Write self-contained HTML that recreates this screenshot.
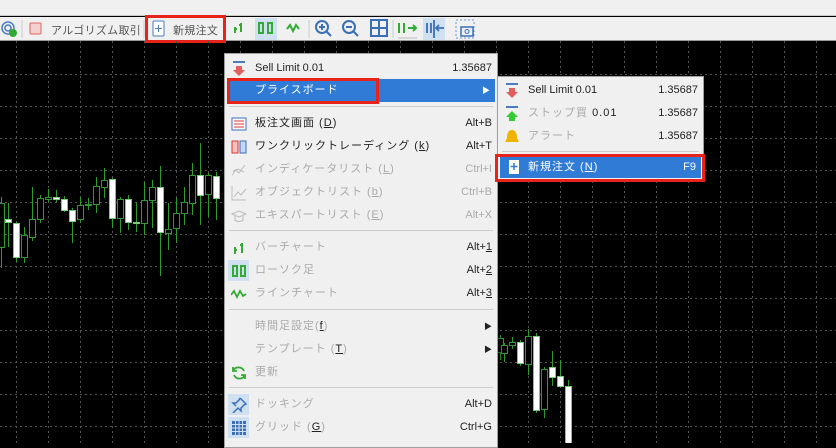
<!DOCTYPE html>
<html><head><meta charset="utf-8">
<style>
*{margin:0;padding:0;box-sizing:border-box}
body{width:836px;height:443px;overflow:hidden;background:#000;font-family:"Liberation Sans","Noto Sans CJK JP",sans-serif;font-size:11px;position:relative}
#top{position:absolute;left:0;top:0;width:836px;height:16px;background:#f0f0f0;border-bottom:1px solid #c8c8c8}
#tb{position:absolute;left:0;top:17px;width:836px;height:24px;background:#f0f0f0;border-bottom:1px solid #999}
.tbt{position:absolute;top:5px;font-size:11px;color:#555;letter-spacing:0.3px}
.red{position:absolute;border:3px solid #e8231a}
#chart{position:absolute;left:0;top:41px}
.menu{position:absolute;background:#f0f0f0;border:1px solid #a0a0a0;box-shadow:2px 2px 3px rgba(0,0,0,.4)}
.it{position:absolute;left:0;right:0;height:23px;line-height:23px;color:#222;font-size:11px}
.it .l{position:absolute;left:30px;letter-spacing:1px}
.it .r{position:absolute;right:5px}
.g{color:#aaa}
.sep{position:absolute;left:4px;right:4px;height:1px;background:#ccc}
.ic{position:absolute;left:6px;top:4px;width:16px;height:16px}
.hl{background:#2f7bd6;color:#fff}
</style></head><body>
<div id="top"></div>
<div id="tb">
<svg width="836" height="24" style="position:absolute;left:0;top:0">
<circle cx="8" cy="11" r="6" fill="none" stroke="#4a7cc0" stroke-width="1.5"/><circle cx="8" cy="11" r="3" fill="none" stroke="#4a7cc0" stroke-width="1.5"/><circle cx="13" cy="16" r="4" fill="#3a3"/>
<line x1="22" y1="3" x2="22" y2="21" stroke="#ccc"/>
<rect x="30" y="6" width="11" height="11" fill="#f4d0d0" stroke="#d66" rx="1"/>
<line x1="144" y1="3" x2="144" y2="21" stroke="#ccc"/>
<rect x="153" y="4" width="11" height="15" fill="#fff" stroke="#4a7cc0" rx="1"/><path d="M158.5 8v7M155 11.5h7" stroke="#4a7cc0"/>
<path d="M235 16v-6M235 12h2M241 6v9M239 8h2" stroke="#3a3" stroke-width="2" fill="none"/>
<rect x="255" y="1" width="22" height="22" fill="#cfe0f0"/>
<rect x="259" y="6" width="4" height="10" fill="none" stroke="#3a3" stroke-width="2"/><rect x="268" y="6" width="4" height="10" fill="none" stroke="#3a3" stroke-width="2"/>
<path d="M287 12l3-4 3 6 3-6 3 4" stroke="#3a3" stroke-width="2" fill="none"/>
<line x1="309" y1="3" x2="309" y2="21" stroke="#ccc"/>
<circle cx="322" cy="10" r="6" fill="none" stroke="#3a6fb8" stroke-width="2"/><path d="M326 14l5 5M319 10h6M322 7v6" stroke="#3a6fb8" stroke-width="2"/>
<circle cx="349" cy="10" r="6" fill="none" stroke="#3a6fb8" stroke-width="2"/><path d="M353 14l5 5M346 10h6" stroke="#3a6fb8" stroke-width="2"/>
<rect x="371" y="3" width="16" height="16" fill="none" stroke="#3a6fb8" stroke-width="2"/><path d="M379 3v16M371 11h16" stroke="#3a6fb8" stroke-width="2"/>
<line x1="393" y1="3" x2="393" y2="21" stroke="#ccc"/>
<path d="M399 6v10M404 6v10M408 11h7M413 8l3 3-3 3" stroke="#3a3" stroke-width="2" fill="none"/><line x1="398" y1="21" x2="417" y2="21" stroke="#bbb"/>
<rect x="423" y="1" width="22" height="22" fill="#cfe0f0"/><path d="M427 6v10M431 6v10M434 3v18M437 11h7M439 8l-3 3 3 3" stroke="#3a6fb8" stroke-width="1.8" fill="none"/>
<rect x="456" y="3" width="18" height="18" fill="none" stroke="#6a9ad0" stroke-dasharray="2 2"/><rect x="461" y="10" width="12" height="9" fill="none" stroke="#3a6fb8" stroke-width="1.5"/><circle cx="467" cy="14.5" r="2" fill="none" stroke="#3a6fb8"/>
</svg>
<div class="tbt" style="left:51px">アルゴリズム取引</div>
<div class="tbt" style="left:173px">新規注文</div>
</div>
<div class="red" style="left:145px;top:15px;width:81px;height:28px"></div>
<svg id="chart" width="836" height="402"></svg>

<div class="menu" style="left:224px;top:53px;width:274px;height:395px">
<div class="it" style="top:3px"><svg class="ic" viewBox="0 0 16 16"><path d="M2 1h12" stroke="#4a7cc0" stroke-width="2"/><path d="M5 5h6v4h3l-6 6-6-6h3z" fill="#e06060"/></svg><span class="l" style="letter-spacing:0">Sell Limit 0.01</span><span class="r">1.35687</span></div>
<div class="it hl" style="top:25px;left:2px;right:2px"><span class="l" style="left:28px">プライスボード</span><span class="r" style="font-size:8px">▶</span></div>
<div class="sep" style="top:52px"></div>
<div class="it" style="top:58px"><svg class="ic" viewBox="0 0 16 16"><rect x="1" y="2" width="14" height="12" fill="#fff" stroke="#3a6fb8"/><path d="M3 5h10M3 8h10M3 11h10" stroke="#d33"/></svg><span class="l">板注文画面 (<u>D</u>)</span><span class="r">Alt+B</span></div>
<div class="it" style="top:81px"><svg class="ic" viewBox="0 0 16 16"><rect x="1" y="2" width="6" height="12" fill="#f6c0c0" stroke="#d33"/><rect x="9" y="2" width="6" height="12" fill="#c0d8f6" stroke="#3a6fb8"/></svg><span class="l">ワンクリックトレーディング (<u>k</u>)</span><span class="r">Alt+T</span></div>
<div class="it g" style="top:104px"><svg class="ic" viewBox="0 0 16 16"><path d="M1 13l4-5 3 3 6-8M2 9l5-2 6 3" stroke="#bbb" fill="none"/></svg><span class="l">インディケータリスト (<u>L</u>)</span><span class="r">Ctrl+I</span></div>
<div class="it g" style="top:127px"><svg class="ic" viewBox="0 0 16 16"><path d="M1 1v14h14M3 12l4-5 3 3 5-6" stroke="#bbb" fill="none"/></svg><span class="l">オブジェクトリスト (<u>b</u>)</span><span class="r">Ctrl+B</span></div>
<div class="it g" style="top:150px"><svg class="ic" viewBox="0 0 16 16"><path d="M1 6l7-3 7 3-7 3zM4 8v4c2 2 6 2 8 0V8" stroke="#bbb" fill="none"/></svg><span class="l">エキスパートリスト (<u>E</u>)</span><span class="r">Alt+X</span></div>
<div class="sep" style="top:176px"></div>
<div class="it" style="top:182px"><svg class="ic" viewBox="0 0 16 16"><path d="M4 14V7M4 10h2M11 3v10M9 5h2" stroke="#3a3" stroke-width="2"/></svg><span class="l g">バーチャート</span><span class="r">Alt+<u>1</u></span></div>
<div class="it" style="top:205px"><div style="position:absolute;left:3px;top:1px;width:21px;height:21px;background:#cfe0f0"></div><svg class="ic" viewBox="0 0 16 16"><rect x="2" y="3" width="4" height="10" fill="none" stroke="#3a3" stroke-width="2"/><rect x="10" y="3" width="4" height="10" fill="none" stroke="#3a3" stroke-width="2"/></svg><span class="l g">ローソク足</span><span class="r">Alt+<u>2</u></span></div>
<div class="it" style="top:228px"><svg class="ic" viewBox="0 0 16 16"><path d="M0 9l3-4 3 6 3-6 3 5 3-2" stroke="#3a3" stroke-width="1.8" fill="none"/></svg><span class="l g">ラインチャート</span><span class="r">Alt+<u>3</u></span></div>
<div class="sep" style="top:255px"></div>
<div class="it" style="top:261px"><span class="l g">時間足設定(<u style="color:#222">f</u>)</span><span class="r" style="font-size:8px">▶</span></div>
<div class="it" style="top:284px"><span class="l g">テンプレート (<u style="color:#222">T</u>)</span><span class="r" style="font-size:8px">▶</span></div>
<div class="it" style="top:307px"><svg class="ic" viewBox="0 0 16 16"><path d="M13 6A6 6 0 0 0 2 6M3 10a6 6 0 0 0 11 0M2 2v4h4M14 14v-4h-4" stroke="#3a3" stroke-width="1.8" fill="none"/></svg><span class="l g">更新</span></div>
<div class="sep" style="top:333px"></div>
<div class="it" style="top:339px"><div style="position:absolute;left:3px;top:1px;width:21px;height:21px;background:#cfe0f0"></div><svg class="ic" viewBox="0 0 16 16"><path d="M9 1l6 6-2 1-3 3 0 3-3-3-5 5M9 1l-1 2-3 3-3 0 3 3" stroke="#3a6fb8" stroke-width="1.5" fill="none"/></svg><span class="l g">ドッキング</span><span class="r">Alt+D</span></div>
<div class="it" style="top:362px"><div style="position:absolute;left:3px;top:1px;width:21px;height:21px;background:#cfe0f0"></div><svg class="ic" viewBox="0 0 16 16"><rect x="1" y="1" width="14" height="14" fill="#3a6fb8"/><path d="M4.5 1v14M8 1v14M11.5 1v14M1 4.5h14M1 8h14M1 11.5h14" stroke="#cfe0f0"/></svg><span class="l g">グリッド (<u style="color:#222">G</u>)</span><span class="r">Ctrl+G</span></div>
</div>

<div class="menu" style="left:497px;top:76px;width:207px;height:104px">
<div class="it" style="top:2px"><svg class="ic" viewBox="0 0 16 16"><path d="M2 1h12" stroke="#4a7cc0" stroke-width="2"/><path d="M5 5h6v4h3l-6 6-6-6h3z" fill="#e06060"/></svg><span class="l" style="letter-spacing:0">Sell Limit 0.01</span><span class="r">1.35687</span></div>
<div class="it" style="top:25px"><svg class="ic" viewBox="0 0 16 16"><path d="M2 1h12" stroke="#4a7cc0" stroke-width="2"/><path d="M5 15h6v-4h3l-6-6-6 6h3z" fill="#3c3"/></svg><span class="l g">ストップ買 <span style="color:#222">0.01</span></span><span class="r">1.35687</span></div>
<div class="it" style="top:48px"><svg class="ic" viewBox="0 0 16 16"><path d="M8 1c-4 0-5 4-5 8l-2 4h14l-2-4c0-4-1-8-5-8z" fill="#f0b400"/></svg><span class="l g">アラート</span><span class="r">1.35687</span></div>
<div class="sep" style="top:74px"></div>
<div class="it hl" style="top:79px;left:2px;right:2px;height:22px;line-height:22px"><svg class="ic" viewBox="0 0 16 16" style="top:3px"><rect x="3" y="1" width="10" height="14" fill="#fff"/><path d="M8 4v7M4.5 7.5h7" stroke="#2f7bd6" stroke-width="1.5"/></svg><span class="l" style="left:28px">新規注文 (<u>N</u>)</span><span class="r">F9</span></div>
</div>

<div class="red" style="left:227px;top:78px;width:152px;height:26px"></div>
<div class="red" style="left:495px;top:154px;width:210px;height:28px"></div>

<script>
var s=document.getElementById('chart'),h='';
for(var x=16;x<836;x+=32)h+='<line x1="'+(x+.5)+'" y1="0" x2="'+(x+.5)+'" y2="402" stroke="#555" stroke-dasharray="2 3"/>';
for(var y=33;y<402;y+=32)h+='<line x1="0" y1="'+(y+.5)+'" x2="836" y2="'+(y+.5)+'" stroke="#555" stroke-dasharray="2 3"/>';
var c=[[1,197,268,203,247,0],[8,203,247,219,222,1],[16,222,262,223,257,1],[24,227,263,235,257,0],[32,187,241,219,237,0],[40,195,223,198,219,0],[48,189,202,197,199,0],[56,190,202,197,199,1],[64,196,212,199,210,1],[72,208,243,210,221,1],[80,197,223,205,219,0],[88,198,210,204,205,0],[96,177,213,186,204,0],[104,168,198,180,187,0],[112,178,228,179,218,1],[120,197,233,199,218,0],[128,195,230,199,222,1],[136,202,232,222,223,1],[144,182,235,200,223,0],[152,180,228,187,200,0],[160,166,276,187,232,1],[168,203,250,229,233,0],[176,198,243,213,228,0],[184,187,225,202,213,0],[192,163,215,175,203,0],[200,143,225,175,195,1],[208,173,217,175,194,0],[216,172,220,176,198,1],
[500,335,360,338,352,0],[504,343,362,345,353,0],[512,337,349,342,345,0],[520,340,366,342,363,1],[528,329,375,336,364,0],[536,333,413,336,410,1],[544,367,418,369,409,0],[552,351,386,367,377,1],[560,360,387,376,386,1],[568,380,460,386,460,1]];
c.forEach(function(k){var o=41;h+='<line x1="'+(k[0]+.5)+'" y1="'+(k[1]-o)+'" x2="'+(k[0]+.5)+'" y2="'+(k[2]-o)+'" stroke="#2e9a2e"/>';
h+='<rect x="'+(k[0]-2.5)+'" y="'+(k[3]-o+.5)+'" width="6" height="'+Math.max(1,k[4]-k[3])+'" fill="'+(k[5]?'#fff':'#000')+'" stroke="'+(k[5]?'#7c7':'#2e9a2e')+'"/>';});
s.innerHTML=h;
</script>
</body></html>
